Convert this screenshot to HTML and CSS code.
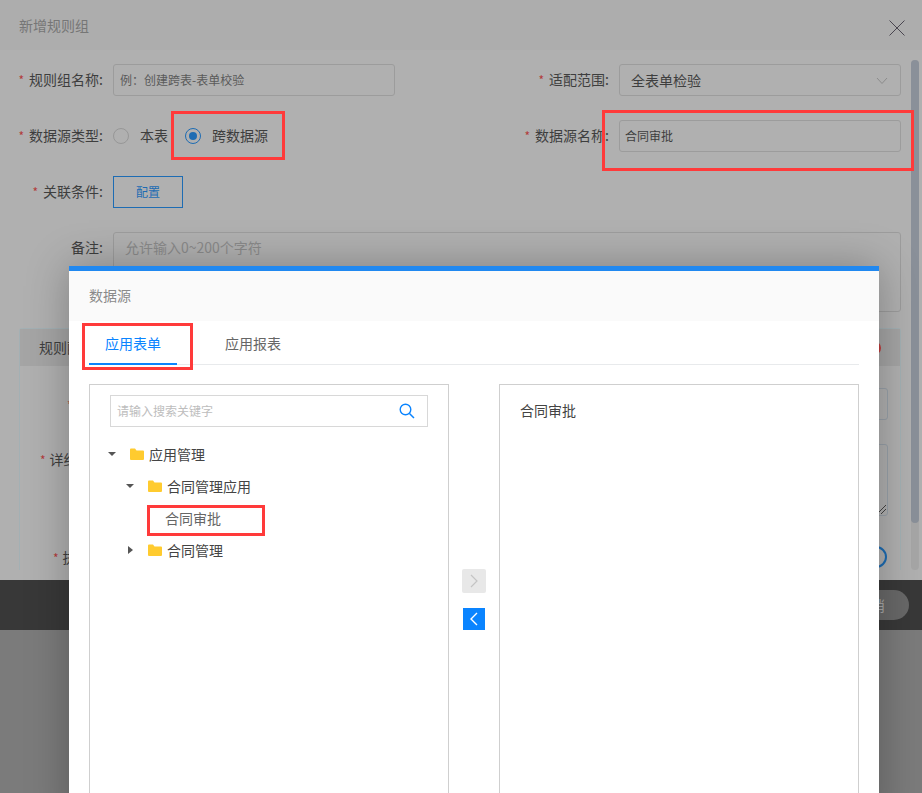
FILE: index.html
```html
<!DOCTYPE html>
<html lang="zh-CN">
<head>
<meta charset="utf-8">
<title>新增规则组</title>
<link rel="stylesheet" href="styles.css">
</head>
<body>
<div class="page">
  <section class="dialog">
    <header class="dialog-head">
      <span class="dialog-title">新增规则组</span>
      <svg class="close" width="16" height="16" viewBox="0 0 16 16"><path d="M.5.5l15 15M15.500.5l-15 15" stroke="#4a4650" fill="none"/></svg>
    </header>
    <div class="dialog-scroll">
      <div class="scroll-content">
        <div class="form-grid">
          <div class="field"><label class="label"><i>*</i>规则组名称:</label><div class="input small muted">例：创建跨表-表单校验</div></div>
          <div class="field"><label class="label"><i>*</i>适配范围:</label><div class="input select"><span>全表单检验</span><svg width="12" height="8" viewBox="0 0 12 8"><path d="M1 1l5 5.500L11 1" stroke="#8c8c8c" fill="none"/></svg></div></div>
          <div class="field"><label class="label"><i>*</i>数据源类型:</label>
            <div class="radios">
              <span class="radio"></span><span class="radio-text">本表</span>
              <span class="radio on"></span><span class="radio-text">跨数据源</span>
            </div>
          </div>
          <div class="field"><label class="label"><i>*</i>数据源名称:</label><div class="input small name">合同审批</div></div>
          <div class="field wide"><label class="label"><i>*</i>关联条件:</label><button class="config">配置</button></div>
          <div class="field wide top"><label class="label">备注:</label><div class="textarea">允许输入0~200个字符</div></div>
        </div>
        <div class="rule-card">
          <div class="rule-head"><span>规则配置</span><span class="rule-del"></span></div>
          <div class="rule-row r1"><span class="rule-label"><i>*</i></span><div class="rule-input"></div></div>
          <div class="rule-row r2"><span class="rule-label"><i>*</i>详细</span><div class="rule-area"><svg width="9" height="9" viewBox="0 0 9 9"><path d="M0 9l9-9M4 9l5-5" stroke="#444" fill="none"/></svg></div></div>
          <div class="rule-row r3"><span class="rule-label"><i>*</i>执行</span><span class="rule-radio"></span></div>
        </div>
      </div>
      <div class="scrollbar"><div class="thumb"></div></div>
    </div>
  </section>
  <footer class="dialog-foot"><button class="cancel">取消</button></footer>

  <span class="mark m-radio"></span>
  <span class="mark m-name"></span>

  <section class="picker">
    <header class="picker-head">数据源</header>
    <nav class="tabs">
      <span class="tab active">应用表单</span>
      <span class="tab">应用报表</span>
    </nav>
    <div class="panes">
      <div class="pane left">
        <div class="search"><span>请输入搜索关键字</span>
          <svg width="16" height="16" viewBox="0 0 16 16"><circle cx="6.500" cy="6.500" r="5.300" stroke="#0a84ff" stroke-width="1.400" fill="none"/><path d="M10.500 10.500l4.500 4.500" stroke="#0a84ff" stroke-width="1.500" fill="none"/></svg>
        </div>
        <ul class="tree">
          <li class="node lv0"><span class="caret down"></span><svg class="folder" width="14" height="12" viewBox="0 0 14 12"><path d="M0 1.500Q0 .5 1 .5h4l1.500 2H13q1 0 1 1V11q0 1-1 1H1q-1 0-1-1z" fill="#ffcb2f"/></svg><span>应用管理</span></li>
          <li class="node lv1"><span class="caret down"></span><svg class="folder" width="14" height="12" viewBox="0 0 14 12"><path d="M0 1.500Q0 .5 1 .5h4l1.500 2H13q1 0 1 1V11q0 1-1 1H1q-1 0-1-1z" fill="#ffcb2f"/></svg><span>合同管理应用</span></li>
          <li class="node lv2"><span>合同审批</span></li>
          <li class="node lv1"><span class="caret right"></span><svg class="folder" width="14" height="12" viewBox="0 0 14 12"><path d="M0 1.500Q0 .5 1 .5h4l1.500 2H13q1 0 1 1V11q0 1-1 1H1q-1 0-1-1z" fill="#ffcb2f"/></svg><span>合同管理</span></li>
        </ul>
      </div>
      <div class="transfer">
        <button class="move off"><svg width="8" height="14" viewBox="0 0 8 14"><path d="M1 1l6 6-6 6" stroke="#c4c4c4" stroke-width="1.200" fill="none"/></svg></button>
        <button class="move on"><svg width="8" height="14" viewBox="0 0 8 14"><path d="M7 1L1 7l6 6" stroke="#fff" stroke-width="1.400" fill="none"/></svg></button>
      </div>
      <div class="pane right"><div class="picked">合同审批</div></div>
    </div>
    <span class="mark m-tab"></span>
    <span class="mark m-node"></span>
  </section>
</div>
</body>
</html>
```
FILE: styles.css
```css
* { box-sizing: border-box; }
html, body { margin: 0; height: 100%; }
body { font-family: "Noto Sans CJK SC", "Liberation Sans", sans-serif; font-size: 14px; color: #3e3e3e; overflow: hidden; }
ul { list-style: none; margin: 0; padding: 0; }
i { font-style: normal; }
button { font: inherit; padding: 0; }

.page { position: relative; width: 922px; height: 793px; overflow: hidden; background: #7b7b7b; }

.dialog { height: 580px; background: #b0b0b0; display: flex; flex-direction: column; }
.dialog-head { flex: none; height: 50px; background: #adadad; display: flex; align-items: center; justify-content: space-between; padding: 0 17px 0 19px; }
.dialog-title { color: #767676; line-height: 48px; }
.close { margin-top: 5px; }

.dialog-scroll { flex: none; height: 520px; display: flex; align-items: flex-start; overflow: hidden; }
.scroll-content { width: 911px; height: 520px; overflow: hidden; padding-top: 14px; }
.scrollbar { width: 8px; height: 510px; margin-top: 10px; background: #a6a6a6; border-radius: 4px; }
.thumb { height: 463px; background: #8a9099; border-radius: 4px; }

.form-grid { display: grid; grid-template-columns: 395px 506px; grid-template-rows: 32px 32px 32px 80px; row-gap: 24px; }
.field { display: flex; align-items: center; }
.field.wide { grid-column: 1 / -1; }
.field.top { align-items: flex-start; }
.field:nth-child(2), .field:nth-child(4) { padding-left: 111px; }
.label { flex: none; width: 113px; padding: 0 10px 2px 0; text-align: right; color: #3e3e3e; white-space: nowrap; }
.field.top .label { padding-top: 5px; }
.label i { color: #b23b3b; margin-right: 5px; font-size: 12px; }
.input { flex: 1; height: 32px; border: 1px solid #9c9c9c; border-radius: 3px; line-height: 29px; padding: 0 6px; color: #3e3e3e; }
.input.small { font-size: 12px; }
.input.name { padding-left: 5px; }
.input.muted { color: #5a5a5a; }
.select { display: flex; align-items: center; justify-content: space-between; padding: 0 12px 0 11px; }
.select svg { margin-top: 1px; }
.radios { display: flex; align-items: center; }
.radio { width: 16px; height: 16px; border: 1px solid #979797; border-radius: 50%; display: flex; align-items: center; justify-content: center; }
.radio.on { border-color: #1d6cb3; margin-left: 17px; }
.radio.on::after { content: ""; width: 8px; height: 8px; border-radius: 50%; background: #1d6cb3; }
.radio-text { margin-left: 11px; padding-bottom: 2px; }
.config { width: 70px; height: 32px; border: 1px solid #1d6cb3; background: transparent; color: #1d6cb3; font-size: 12px; line-height: 28px; }
.textarea { width: 788px; height: 80px; border: 1px solid #9c9c9c; border-radius: 3px; color: #8a8a8a; padding: 4px 11px; }

.rule-card { margin: 16px 0 0 19px; width: 882px; height: 260px; border: 1px solid #a3b0b4; border-bottom: 0; border-radius: 3px 3px 0 0; }
.rule-head { height: 37px; background: #a5a5a5; padding: 0 19px; line-height: 37px; display: flex; justify-content: space-between; align-items: center; }
.rule-del { width: 14px; height: 14px; border: 2px solid #c23a3a; border-radius: 50%; }
.rule-label { white-space: nowrap; }
.rule-label i { color: #b23b3b; margin-right: 4px; font-size: 12px; }
.rule-row { display: flex; justify-content: space-between; padding-right: 12px; }
.r1 { margin-top: 22px; padding-left: 47px; align-items: center; }
.r2 { margin-top: 24px; padding-left: 20px; }
.r2 .rule-label { margin-top: 5px; }
.r3 { margin-top: 30px; padding-left: 33px; align-items: center; }
.rule-input { width: 300px; height: 32px; border: 1px solid #98a0a8; border-radius: 3px; }
.rule-area { width: 300px; height: 72px; border: 1px solid #98a0a8; border-radius: 3px; display: flex; align-items: flex-end; justify-content: flex-end; padding: 1px; }
.rule-radio { width: 22px; height: 22px; border: 2px solid #1d6cb3; border-radius: 50%; margin-right: 1px; }

.dialog-foot { height: 50px; background: #383838; display: flex; align-items: center; justify-content: flex-end; padding-right: 13px; }
.cancel { width: 76px; height: 30px; border: 0; border-radius: 15px; background: #686868; color: #a8a8a8; }

.mark { position: absolute; border: 3px solid #ff3a3a; pointer-events: none; }
.m-radio { left: 171px; top: 111px; width: 114px; height: 49px; }
.m-name { left: 602px; top: 110px; width: 312px; height: 61px; }
.m-tab { left: 13px; top: 52px; width: 111px; height: 47px; }
.m-node { left: 78px; top: 234px; width: 118px; height: 31px; }

.picker { position: absolute; left: 69px; top: 266px; width: 810px; height: 560px; background: #fff; border-top: 5px solid #2088f0; box-shadow: 0 0 40px rgba(0,0,0,.28); }
.picker-head { height: 50px; background: #fafafa; color: #8a8a8a; font-size: 14px; line-height: 48px; padding-left: 20px; }
.tabs { margin: 0 20px; height: 44px; border-bottom: 1px solid #e8eaec; display: flex; }
.tab { width: 88px; height: 44px; line-height: 44px; text-align: center; color: #666; font-size: 14px; margin-right: 32px; }
.tab.active { color: #0a84ff; border-bottom: 2px solid #0a84ff; }
.panes { display: flex; margin: 19px 20px 0; height: 600px; }
.pane { width: 360px; border: 1px solid #cfcfcf; }
.transfer { width: 50px; padding-top: 185px; display: flex; flex-direction: column; align-items: center; gap: 15px; }
.move { display: flex; align-items: center; justify-content: center; border: 0; }
.move.off { width: 24px; height: 24px; background: #e8e8e8; border-radius: 2px; }
.move.on { width: 22px; height: 22px; background: #0a84ff; }
.search { margin: 10px 20px 0; height: 32px; border: 1px solid #d8d8d8; display: flex; align-items: center; justify-content: space-between; padding: 0 12px 0 6px; color: #bdbdbd; font-size: 12px; }
.search span { padding-bottom: 2px; }
.tree { margin-top: 11px; color: #444; font-size: 14px; }
.node { height: 32px; display: flex; align-items: center; }
.lv0 { padding-left: 18px; }
.lv1 { padding-left: 36px; }
.lv2 { padding-left: 75px; color: #666; }
.caret { width: 0; height: 0; border-style: solid; border-color: transparent; flex: none; }
.caret.down { border-width: 4px 4px 0; border-top-color: #555; margin-right: 14px; }
.caret.right { border-width: 4px 0 4px 5px; border-left-color: #555; margin: 0 15px 0 2px; }
.folder { margin-right: 5px; flex: none; }
.picked { padding: 15px 20px; color: #444; font-size: 14px; line-height: 20px; }
```
